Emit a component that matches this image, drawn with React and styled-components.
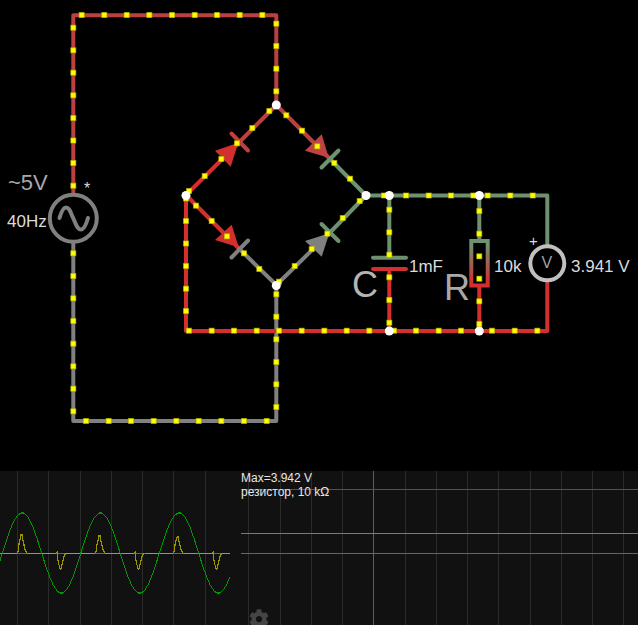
import styled, { createGlobalStyle } from 'styled-components'
import { FaCog } from 'react-icons/fa'

const RED = '#d32f2f'
const DIM_RED = '#bc4040'
const GREEN = '#6e9270'
const GRAY = '#808080'

const wires = [
  { color: DIM_RED, d: 'M73.3 193 V15.3 H276.3 V105' },
  { color: GRAY, d: 'M73.3 243 V421 H276.3 V285' },
  { color: RED, d: 'M547.3 282 V331 H186 V195' },
  { color: GREEN, d: 'M366 195.5 H547.3 V245' },
  { color: RED, d: 'M186 195 L239 142.5' },
  { color: DIM_RED, d: 'M239 142.5 L276.3 105' },
  { color: DIM_RED, d: 'M276.3 105 L330 159' },
  { color: GREEN, d: 'M330 159 L366 195.5' },
  { color: RED, d: 'M186 195 L239.5 249' },
  { color: GRAY, d: 'M239.5 249 L276.3 285' },
  { color: GRAY, d: 'M276.3 285 L330 232.5' },
  { color: GREEN, d: 'M330 232.5 L366 195.5' },
  { color: GREEN, d: 'M389.3 195.5 V257' },
  { color: RED, d: 'M389.3 269 V331' },
  { color: GREEN, d: 'M479.3 195.5 V241' },
  { color: RED, d: 'M479.3 286 V331' },
]

const diodes = [
  { arrow: '238.3,142.7 215,150.7 230.7,166.7', fill: RED, bar: 'M231.5 133.5 L248 150.5', barColor: DIM_RED },
  { arrow: '328.7,157.7 321.7,134.3 305,150.7', fill: '#c04343', bar: 'M321.5 167.5 L338.5 150.5', barColor: GREEN },
  { arrow: '238.7,247.3 231.7,224.7 215,240', fill: RED, bar: 'M231.5 257.5 L248 240.5', barColor: GRAY },
  { arrow: '329.3,233.3 305,241 321.7,256.7', fill: GRAY, bar: 'M321.5 224 L338.5 241', barColor: GREEN },
]

const junctions = [
  [186, 195.5], [276.3, 105], [366, 195.5], [276.3, 285.5],
  [389.3, 195.5], [479.3, 195.5], [389.3, 331], [479.3, 331],
]

const currentDots = [
  [81.7, 15], [104.3, 15], [126.7, 15], [149.3, 15], [172, 15], [194.7, 15], [217, 15], [239.7, 15], [262.3, 15],
  [73.3, 27.7], [73.3, 50.3], [73.3, 72.7], [73.3, 95.3], [73.3, 118], [73.3, 140.5], [73.3, 163], [73.3, 185.7],
  [276.3, 23.7], [276.3, 46], [276.3, 68.7], [276.3, 91.3],
  [73.3, 253.3], [73.3, 276], [73.3, 298.3], [73.3, 321], [73.3, 343.7], [73.3, 366.3], [73.3, 388.7], [73.3, 411.3],
  [86, 421], [108.7, 421], [131, 421], [153.7, 421], [176.3, 421], [198.7, 421], [221.3, 421], [244, 421], [266.7, 421],
  [276.3, 407], [276.3, 384.3], [276.3, 362], [276.3, 339.3], [276.3, 316.7], [276.3, 294.3],
  [189, 191], [204.7, 176], [221.3, 159], [237, 143.3], [252.3, 128], [269.3, 111],
  [286.3, 115.3], [302, 130.7], [317.3, 146.3], [334.3, 163], [350, 178.7],
  [359.7, 201], [342.7, 218], [327.3, 233.7], [311.7, 249], [294.7, 266], [279, 281.7],
  [196, 205.7], [211.7, 221], [227, 236.3], [244, 253.3], [259.3, 269],
  [186, 198.5], [186, 221], [186, 243.5], [186, 266], [186, 288.7], [186, 311],
  [189, 330.7], [211.7, 330.7], [234, 330.7], [256.7, 330.7], [279, 330.7], [301.7, 330.7], [324.3, 330.7], [346.7, 330.7], [369.3, 330.7],
  [394, 330.7], [416, 330.7], [438.7, 330.7], [461, 330.7], [492, 330.7], [514.7, 330.7], [537.3, 330.7],
  [384, 195.5], [406, 195.5], [428.7, 195.5], [451, 195.5], [473.3, 195.5], [487.7, 195.5], [510.3, 195.5], [532.7, 195.5],
  [389.3, 209.7], [389.3, 232.3], [389.3, 254.7], [389.3, 277.3], [389.3, 300], [389.3, 322.7],
  [479.3, 211], [479.3, 233.7], [479.3, 256.3], [479.3, 278.7], [479.3, 301.3], [479.3, 324],
]

const labels = [
  { x: 8, y: 190, size: 22, color: '#a8a8a8', text: '~5V' },
  { x: 7, y: 227, size: 17, color: '#dcdcdc', text: '40Hz' },
  { x: 84, y: 194, size: 16, color: '#dcdcdc', text: '*' },
  { x: 409, y: 272, size: 17, color: '#dcdcdc', text: '1mF' },
  { x: 352, y: 297, size: 36, color: '#b4b4b4', text: 'C' },
  { x: 444, y: 300, size: 36, color: '#a8a8a8', text: 'R' },
  { x: 494, y: 272, size: 17, color: '#dcdcdc', text: '10k' },
  { x: 529, y: 246, size: 15, color: '#dcdcdc', text: '+' },
  { x: 541.5, y: 268, size: 16, color: '#a0a0a0', text: 'V' },
  { x: 571, y: 272, size: 17, color: '#dcdcdc', text: '3.941 V' },
]

const leftGrid = [17.5, 48.5, 80.5, 111.5, 142.5, 173.5, 205.5]
const rightGrid = [7.5, 39.5, 70.5, 101.5, 164.5, 195.5, 226.5, 257.5, 289.5, 320.5, 351.5, 382.5]

const Global = createGlobalStyle`
  html, body { margin: 0; padding: 0; background: #000; }
  body { font-family: "Liberation Sans", Arial, sans-serif; }
`

const Page = styled.div`
  width: 638px;
  height: 625px;
  display: flex;
  flex-direction: column;
  overflow: hidden;
  background: #000;
`

const Canvas = styled.svg`
  display: block;
  width: 638px;
  height: 471px;
  flex: none;
`

const Label = styled.text`
  font-family: "Liberation Sans", Arial, sans-serif;
  font-size: ${(p) => p.$size}px;
  fill: ${(p) => p.$color};
`

const Wire = styled.path`
  fill: none;
  stroke: ${(p) => p.$color};
  stroke-width: ${(p) => p.$width || 4}px;
  stroke-linecap: round;
  stroke-linejoin: round;
`

const Dot = styled.rect`
  fill: #ffff00;
  stroke: rgba(190, 190, 0, 0.6);
  stroke-width: 1px;
`

const ScopeRow = styled.div`
  flex: 1;
  display: flex;
  background: #111;
`

const Scope = styled.div`
  position: relative;
  height: 154px;
  width: ${(p) => p.$width}px;
  flex: none;
`

const Plot = styled.svg`
  display: block;
  width: 100%;
  height: 100%;
`

const GridLine = styled.line`
  stroke: ${(p) => p.$color || '#2b2b2b'};
  stroke-width: 1px;
  shape-rendering: crispEdges;
`

const Trace = styled.polyline`
  fill: none;
  stroke: ${(p) => p.$color};
  stroke-width: 1.2px;
  shape-rendering: crispEdges;
`

const ScopeInfo = styled.div`
  position: absolute;
  top: 0;
  left: 0;
  font-size: 12px;
  line-height: 14px;
  color: #e8e8e8;
  white-space: nowrap;
`

const Settings = styled.div`
  position: absolute;
  left: 8px;
  top: 138px;
  color: #444;
  font-size: 20px;
  line-height: 0;
`

const sinePoints = () => {
  const pts = []
  for (let x = 0; x <= 230; x++) {
    const y = 82 - 40 * Math.sin((2 * Math.PI * (x - 2.4)) / 78.5)
    pts.push(`${x},${Math.round(y)}`)
  }
  return pts.join(' ')
}

// the voltage across the resistor only shows while the diodes conduct
const pulse = (cx, h) =>
  `${cx - 5},82 ${cx - 4},81 ${cx - 3},${82 - h * 0.5} ${cx - 1},${82 - h} ${cx},${82 - h} ${cx + 1},${82 - h * 0.7} ${cx + 3},${82 - h * 0.2} ${cx + 5},82`

const flatParts = [
  [0, 17], [27, 56], [66, 95], [105, 134], [145, 173], [183, 213], [222, 230],
]

const Circuit = () => (
  <Canvas viewBox="0 0 638 471">
    <defs>
      <linearGradient id="res" gradientUnits="userSpaceOnUse" x1="0" y1="241" x2="0" y2="286">
        <stop offset="0.1" stopColor={GREEN} />
        <stop offset="0.9" stopColor={RED} />
      </linearGradient>
    </defs>

    {wires.map((w) => (
      <Wire key={w.d} d={w.d} $color={w.color} />
    ))}

    {diodes.map((d) => (
      <g key={d.arrow}>
        <polygon points={d.arrow} fill={d.fill} />
        <Wire d={d.bar} $color={d.barColor} />
      </g>
    ))}

    <Wire d="M373 257.7 H406" $color={GREEN} />
    <Wire d="M373 269 H406" $color={RED} />
    <rect x="471.3" y="241" width="16.4" height="44.5" fill="none" stroke="url(#res)" strokeWidth="4" />

    <circle cx="73.3" cy="218.3" r="23.5" fill="none" stroke={GRAY} strokeWidth="4" />
    <Wire
      d="M59.5 218 C61.5 211,63.5 207.5,66 207.5 C70 207.5,70.5 213,73.3 218.3 C76 224,77 229.5,81 229.5 C84 229.5,86 225,88 218"
      $color={GRAY}
    />

    <circle cx="547.3" cy="263.3" r="17" fill="none" stroke="#c0c0c0" strokeWidth="4" />

    {currentDots.map(([x, y]) => (
      <Dot key={`${x}-${y}`} x={x - 2.5} y={y - 2.5} width="5" height="5" />
    ))}

    {junctions.map(([x, y]) => (
      <circle key={`${x}-${y}`} cx={x} cy={y} r="4.5" fill="#fff" />
    ))}

    {labels.map((l) => (
      <Label key={l.text} x={l.x} y={l.y} $size={l.size} $color={l.color}>
        {l.text}
      </Label>
    ))}
  </Canvas>
)

const WavePlot = () => (
  <Scope $width={241}>
    <Plot viewBox="0 0 241 154">
      {leftGrid.map((x) => (
        <GridLine key={x} x1={x} x2={x} y1="0" y2="154" />
      ))}
      <GridLine x1="0" x2="230" y1="82.5" y2="82.5" $color="#666" />
      {flatParts.map(([a, b]) => (
        <GridLine key={a} x1={a} x2={b} y1="82.5" y2="82.5" $color="#a8a400" />
      ))}
      <Trace points={sinePoints()} $color="#009800" />
      <Trace points={pulse(22, 18)} $color="#9a9600" />
      <Trace points={pulse(61, -16)} $color="#9a9600" />
      <Trace points={pulse(100, 17)} $color="#9a9600" />
      <Trace points={pulse(139, -16)} $color="#9a9600" />
      <Trace points={pulse(178, 16)} $color="#9a9600" />
      <Trace points={pulse(217, -16)} $color="#9a9600" />
    </Plot>
  </Scope>
)

const DetailPlot = () => (
  <Scope $width={397}>
    <Plot viewBox="0 0 397 154">
      {rightGrid.map((x) => (
        <GridLine key={x} x1={x} x2={x} y1="0" y2="154" />
      ))}
      <GridLine x1="132.5" x2="132.5" y1="0" y2="154" $color="#5e5e5e" />
      <GridLine x1="0" x2="397" y1="18.5" y2="18.5" $color="#008c00" />
      <GridLine x1="0" x2="397" y1="62.5" y2="62.5" $color="#8a8a00" />
      <GridLine x1="0" x2="397" y1="82.5" y2="82.5" $color="#666" />
    </Plot>
    <ScopeInfo>
      Max=3.942 V
      <br />
      резистор, 10 kΩ
    </ScopeInfo>
    <Settings>
      <FaCog />
    </Settings>
  </Scope>
)

export default function App() {
  return (
    <Page>
      <Global />
      <Circuit />
      <ScopeRow>
        <WavePlot />
        <DetailPlot />
      </ScopeRow>
    </Page>
  )
}
